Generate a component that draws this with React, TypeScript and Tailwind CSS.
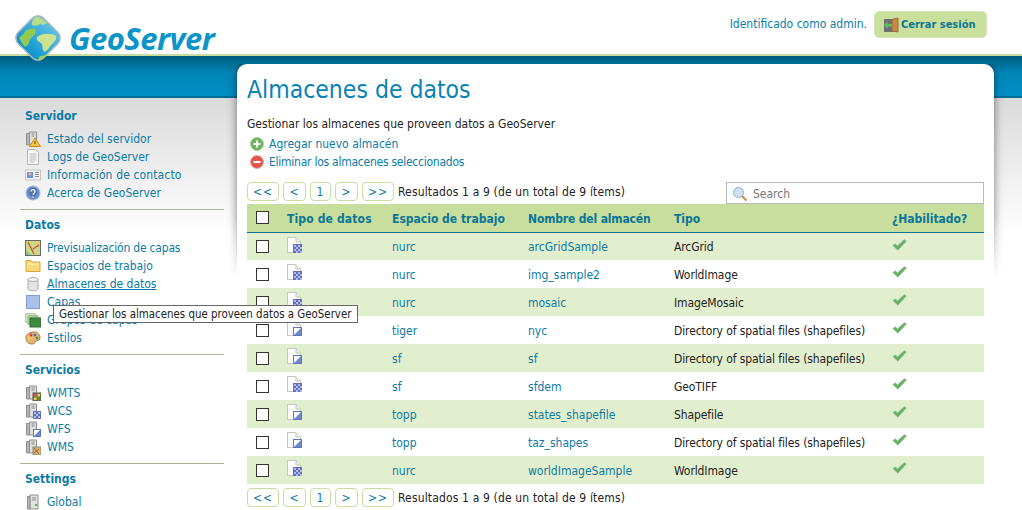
const linkClass = "text-[#0b7ba6]";

function Doc({ raster }: { raster: boolean }) {
  return (
    <svg width="16" height="16" viewBox="0 0 16 16" className="block">
      <path d="M.5.5h8.500l4.500 4.500v10.500h-13z" fill="#fff" stroke="#c3c8bd" />
      <path d="M9 .5v4.500h4.500" fill="#eee" stroke="#c3c8bd" />
      {raster ? (
        <g>
          <rect x="6" y="7" width="9" height="9" fill="#5f6fc4" />
          <path d="M7 8h2v2H7zM11 8h2v2h-2zM9 10h2v2H9zM13 10h2v2h-2zM7 12h2v2H7zM11 12h2v2h-2zM9 14h2v2H9zM13 14h2v2h-2z" fill="#b4bde8" />
        </g>
      ) : (
        <g>
          <rect x="6.500" y="7.500" width="8" height="8" fill="#fff" stroke="#5f75c4" />
          <path d="M7 15l7-7v7z" fill="#6f88d4" />
        </g>
      )}
    </svg>
  );
}

function Check() {
  return (
    <svg width="15" height="12" viewBox="0 0 15 12" className="block">
      <path d="M.8 6.500l2.400-1.700 2.300 2L12.300.6l2.200 1.300-8.600 9.400z" fill="#66ad66" stroke="#9cc49c" strokeWidth=".7" />
    </svg>
  );
}

function ServerBase() {
  return (
    <g>
      <path d="M4.500 1h7v13h-7z" fill="#dedede" stroke="#8f8f8f" />
      <path d="M1.500 2.500h3V14h-3z" fill="#b5b5b5" stroke="#8f8f8f" />
      <path d="M6.500 3h3M6.500 5h3" stroke="#8a8a8a" />
    </g>
  );
}

function NavIcon({ name }: { name: string }) {
  const wrap = (children: React.ReactNode) => (
    <svg width="16" height="16" viewBox="0 0 16 16" className="shrink-0">
      {children}
    </svg>
  );
  switch (name) {
    case "status":
      return wrap(
        <>
          <ServerBase />
          <path d="M10 7l5.500 8.500h-11z" fill="#f6c945" stroke="#c98a1c" />
          <path d="M10 10v3" stroke="#5a4210" />
        </>
      );
    case "logs":
      return wrap(
        <>
          <path d="M2.500.5h8l3 3v12h-11z" fill="#f8f8f8" stroke="#b4b4b4" />
          <path d="M4.500 5h7M4.500 7h7M4.500 9h7M4.500 11h7M4.500 13h5" stroke="#b9b9b9" />
        </>
      );
    case "contact":
      return wrap(
        <>
          <rect x=".5" y="3" width="15" height="10" fill="#f4f4f4" stroke="#c5c5c5" />
          <rect x="2" y="5" width="6" height="6" fill="#6f95d8" />
          <circle cx="5" cy="7" r="1.500" fill="#e8b48a" />
          <path d="M10 5.500h4M10 7.500h4M10 9.500h4" stroke="#8f8f8f" />
        </>
      );
    case "about":
      return wrap(
        <>
          <circle cx="8" cy="8" r="7" fill="#6f8fcb" stroke="#a9b8d8" />
          <circle cx="8" cy="7" r="4.500" fill="#4f74b8" />
          <path d="M6 6.500a2 2 0 1 1 3 1.800c-.7.400-1 .7-1 1.500M8 11.500v1" stroke="#fff" strokeWidth="1.300" fill="none" />
        </>
      );
    case "preview":
      return wrap(
        <>
          <rect x=".5" y=".5" width="15" height="15" fill="#c8d98a" stroke="#666" />
          <path d="M9 1h6v7z" fill="#e6c96a" />
          <path d="M1 10l5 5H1z" fill="#8fc08f" />
          <path d="M3 2l6 12M8 9l6-4" stroke="#d8452c" strokeWidth="1.200" />
        </>
      );
    case "folder":
      return wrap(
        <>
          <path d="M1 2.500h5l1 1.500h8v9.500H1z" fill="#f8da7c" stroke="#d9a441" />
          <path d="M2 6h12" stroke="#fff3c4" />
        </>
      );
    case "store":
      return wrap(
        <>
          <path d="M3 3v10c0 2.300 10 2.300 10 0V3z" fill="#e3e3e3" stroke="#adadad" />
          <ellipse cx="8" cy="3.500" rx="5" ry="2" fill="#f5f5f5" stroke="#adadad" />
        </>
      );
    case "layer":
      return wrap(<rect x="1.500" y="1.500" width="13" height="13" fill="#a8c0ea" stroke="#7f9fd0" />);
    case "group":
      return wrap(
        <>
          <rect x=".5" y="1.500" width="10" height="9" fill="#cfe5c5" stroke="#b7d3ab" />
          <rect x="3" y="3.500" width="10" height="9" fill="#a9cc9b" stroke="#9cc08e" />
          <rect x="5" y="6" width="11" height="9" fill="#3f8a3f" stroke="#2e6d2e" />
        </>
      );
    case "style":
      return wrap(
        <>
          <path d="M1 8c0-4 4-6 8-6s6 3 6 6-3 2-4 3-1 3-4 3-6-2-6-6z" fill="#e7b677" stroke="#a9753a" />
          <circle cx="6" cy="5" r="1.500" fill="#d8452c" />
          <circle cx="10" cy="5" r="1.500" fill="#4f74b8" />
          <circle cx="12" cy="8" r="1.500" fill="#56a04f" />
          <circle cx="4" cy="8" r="1.500" fill="#f0d44a" />
        </>
      );
    case "wmts":
      return wrap(
        <>
          <ServerBase />
          <rect x="8" y="8" width="8" height="8" fill="#68813f" stroke="#555" />
          <path d="M9 9h2.500v2.500H9z" fill="#e0584a" />
          <path d="M12.500 9H15v2.500h-2.500z" fill="#f0cf4a" />
          <path d="M9 12.500h2.500V15H9z" fill="#f0cf4a" />
        </>
      );
    case "wcs":
      return wrap(
        <>
          <ServerBase />
          <rect x="8" y="8" width="8" height="8" fill="#5f6fc4" />
          <path d="M9 9h2v2H9zM13 9h2v2h-2zM11 11h2v2h-2zM9 13h2v2H9zM13 13h2v2h-2z" fill="#b4bde8" />
        </>
      );
    case "wfs":
      return wrap(
        <>
          <ServerBase />
          <rect x="8.500" y="8.500" width="7" height="7" fill="#fff" stroke="#5f75c4" />
          <path d="M9 15l6-6v6z" fill="#6f88d4" />
        </>
      );
    case "wms":
      return wrap(
        <>
          <ServerBase />
          <rect x="8" y="8" width="8" height="8" fill="#c8bd6a" stroke="#888" />
          <path d="M9 9l5 6M9 14l5-4" stroke="#d8452c" />
        </>
      );
    default:
      return wrap(
        <>
          <path d="M5 1h8v14H5z" fill="#e2e2e2" stroke="#8f8f8f" />
          <path d="M2.500 2.500H5V15H2.500z" fill="#b5b5b5" stroke="#8f8f8f" />
          <path d="M7 4h4M7 6h4" stroke="#8a8a8a" />
          <path d="M10 11h2" stroke="#3a9a3a" strokeWidth="1.500" />
        </>
      );
  }
}

const sections = [
  {
    title: "Servidor",
    items: [
      ["status", "Estado del servidor", ""],
      ["logs", "Logs de GeoServer", ""],
      ["contact", "Información de contacto", "tracking-[0.13px]"],
      ["about", "Acerca de GeoServer", ""],
    ],
  },
  {
    title: "Datos",
    items: [
      ["preview", "Previsualización de capas", "tracking-[-0.2px]"],
      ["folder", "Espacios de trabajo", ""],
      ["store", "Almacenes de datos", "underline"],
      ["layer", "Capas", ""],
      ["group", "Grupos de capas", ""],
      ["style", "Estilos", ""],
    ],
  },
  {
    title: "Servicios",
    items: [
      ["wmts", "WMTS", ""],
      ["wcs", "WCS", ""],
      ["wfs", "WFS", ""],
      ["wms", "WMS", ""],
    ],
  },
  { title: "Settings", items: [["global", "Global", ""]] },
];

const rows = [
  [true, "nurc", "arcGridSample", "ArcGrid"],
  [true, "nurc", "img_sample2", "WorldImage"],
  [true, "nurc", "mosaic", "ImageMosaic"],
  [false, "tiger", "nyc", "Directory of spatial files (shapefiles)"],
  [false, "sf", "sf", "Directory of spatial files (shapefiles)"],
  [true, "sf", "sfdem", "GeoTIFF"],
  [false, "topp", "states_shapefile", "Shapefile"],
  [false, "topp", "taz_shapes", "Directory of spatial files (shapefiles)"],
  [true, "nurc", "worldImageSample", "WorldImage"],
] as const;

function Pager() {
  const buttons = [
    ["<<", "w-[32px]"],
    ["<", "w-[23px]"],
    ["1", "w-[21px]"],
    [">", "w-[23px]"],
    [">>", "w-[32px]"],
  ];
  return (
    <div className="flex h-[19px] items-center">
      <div className="flex gap-[4px]">
        {buttons.map(([label, width]) => (
          <span
            key={label}
            className={`flex h-[19px] items-center justify-center rounded-[4px] border border-[#c8dea0] bg-white tracking-[1px] ${linkClass} ${width}`}
          >
            {label}
          </span>
        ))}
      </div>
      <span className="ml-[4px] tracking-[0.15px] text-[#222]">Resultados 1 a 9 (de un total de 9 ítems)</span>
    </div>
  );
}

function Globe() {
  return (
    <svg width="54" height="54" viewBox="0 0 54 54" className="absolute left-[11px] top-[11px]">
      <defs>
        <linearGradient id="sea" x1="0" y1="0" x2="0" y2="1">
          <stop offset="0" stopColor="#5cc0e4" />
          <stop offset="1" stopColor="#0b93cf" />
        </linearGradient>
      </defs>
      <rect x="9" y="9" width="36" height="36" rx="8" transform="rotate(45 27 27)" fill="url(#sea)" stroke="#aebabf" strokeWidth="1.500" />
      <path d="M8 27c3-3 5-4 7-8 4-1 7-2 9-1 2 3 0 6-3 8-2 2-3 5-4 8-2 2-3 2-4 1-2-3-3-5-5-8z" fill="#8fca52" />
      <path d="M26 26c5-4 14-4 19-1 1 3-1 5-4 8-3 4-5 7-8 8-2-3-1-7-3-9-2-1-5-3-4-6z" fill="#cbe38f" />
      <path d="M25 6c3-1 7 2 11 6-2 2-5 2-7 1-3 2-5 2-8 1-1-3 1-6 4-8z" fill="#b7dc8d" />
      <path d="M29 45c3 0 6-1 8-2-2 3-6 6-9 6-1-2 0-3 1-4z" fill="#9ccf5c" />
    </svg>
  );
}

export default function App() {
  return (
    <div className="relative h-[510px] w-[1022px] overflow-hidden bg-white font-['DejaVu_Sans_Condensed','DejaVu_Sans',sans-serif] text-[12px] leading-[18px]">
      <header className="flex h-[54px] items-start justify-end pr-[35px] pt-[11px]">
        <Globe />
        <span className="absolute left-[69px] top-[17px] font-['Open_Sans',sans-serif] text-[31px] font-bold italic leading-[42px] tracking-[-0.5px] text-[#0a94c8]">
          GeoServer
        </span>
        <span className={`mr-[7px] mt-[4px] ${linkClass}`}>Identificado como admin.</span>
        <span className="flex h-[27px] w-[113px] items-center gap-[2px] whitespace-nowrap rounded-[5px] border border-[#d6e6b4] bg-[#c8e09c] pl-[8px] text-[11px] font-bold text-[#0b7596]">
          <svg width="16" height="16" viewBox="0 0 16 16" className="shrink-0">
            <path d="M1 2h9v13H1z" fill="#6f6f6f" />
            <path d="M9 2.500L15 1v14l-6-1z" fill="#c58a4a" stroke="#9a6a35" />
            <path d="M1 8l3.500-3.500V7H9v2.500H4.500V12z" fill="#5cbf68" />
          </svg>
          Cerrar sesión
        </span>
      </header>
      <div className="h-[2px] bg-[#c8dea0]" />
      <div className="h-[42px] border-b-2 border-[#006f96] bg-gradient-to-b from-[#005c7e] via-[#0085b5] via-40% to-[#0090c4]" />
      <div className="flex h-[412px] bg-[linear-gradient(#dadada,#ffffff_135px)]">
        <nav className="w-[237px] shrink-0 pl-[20px] pr-[13px] pt-[9px]">
          {sections.map((section, i) => (
            <section key={section.title} className={i < 3 ? "mb-[6px] border-b border-[#a9b890] pb-[7px]" : ""}>
              <h3 className="mb-[5px] pl-[5px] text-[12px] font-bold leading-[18px] text-[#0b7ba6]">{section.title}</h3>
              {section.items.map(([icon, label, extra]) => (
                <div key={label} className="flex h-[18px] items-center gap-[6px] pl-[5px]">
                  <NavIcon name={icon} />
                  <span className={`${linkClass} ${extra}`}>{label}</span>
                </div>
              ))}
            </section>
          ))}
        </nav>
        <div className="relative -mt-[34px] h-[446px] w-[757px] shrink-0">
          <div className="absolute inset-x-0 top-0 h-[216px] rounded-t-[10px] shadow-[0_0_10px_rgba(0,0,0,0.5)] [mask-clip:no-clip] [mask-image:linear-gradient(#000_70%,transparent)] [mask-repeat:repeat-x]" />
          <main className="relative h-full rounded-t-[10px] bg-white px-[10px] pt-[8px]">
            <h1 className="text-[24.500px] font-normal leading-[36px] text-[#0a82b4]">Almacenes de datos</h1>
            <p className="mt-[7px] text-[#222]">Gestionar los almacenes que proveen datos a GeoServer</p>
            <div className={`mt-[2px] flex h-[18px] items-center gap-[5px] pl-[3px] ${linkClass}`}>
              <svg width="14" height="14" viewBox="0 0 14 14">
                <circle cx="7" cy="7" r="6.500" fill="#6db35c" stroke="#a5cf99" />
                <path d="M7 3.500v7M3.500 7h7" stroke="#fff" strokeWidth="2" />
              </svg>
              Agregar nuevo almacén
            </div>
            <div className={`flex h-[18px] items-center gap-[5px] pl-[3px] tracking-[-0.25px] ${linkClass}`}>
              <svg width="14" height="14" viewBox="0 0 14 14">
                <circle cx="7" cy="7" r="6.500" fill="#e0564f" stroke="#eda8a3" />
                <path d="M3.500 7h7" stroke="#fff" strokeWidth="2" />
              </svg>
              Eliminar los almacenes seleccionados
            </div>
            <div className="mt-[11px] flex items-start justify-between">
              <Pager />
              <div className="flex h-[22px] w-[258px] items-center gap-[5px] border border-[#bbbbbb] bg-white pl-[5px] pt-[1px] text-[#777]">
                <svg width="16" height="16" viewBox="0 0 16 16">
                  <circle cx="6.500" cy="6.500" r="5" fill="#cfe0f2" stroke="#8fb0d0" />
                  <path d="M10 10l4.500 4.500" stroke="#c98a4a" strokeWidth="2" />
                </svg>
                Search
              </div>
            </div>
            <table className="w-[737px] table-fixed border-collapse">
              <colgroup>
                <col className="w-[40px]" />
                <col className="w-[105px]" />
                <col className="w-[136px]" />
                <col className="w-[146px]" />
                <col className="w-[218px]" />
                <col />
              </colgroup>
              <thead>
                <tr className="h-[28px] border-b border-[#0b7596] bg-[#c8de9c] text-left font-bold text-[#0b7596]">
                  <th className="pl-[9px]">
                    <span className="block size-[13px] border border-[#333] bg-white" />
                  </th>
                  <th className="pt-[2px] font-bold tracking-[0.15px]">Tipo de datos</th>
                  <th className="pt-[2px] font-bold">Espacio de trabajo</th>
                  <th className="pt-[2px] font-bold tracking-[-0.15px]">Nombre del almacén</th>
                  <th className="pt-[2px] font-bold">Tipo</th>
                  <th className="pt-[2px] font-bold">¿Habilitado?</th>
                </tr>
              </thead>
              <tbody>
                {rows.map(([raster, workspace, store, type], i) => (
                  <tr key={store} className={`h-[28px] ${i % 2 === 0 ? "bg-[#e2efcf]" : "bg-white"}`}>
                    <td className="pl-[9px] pt-[1px]">
                      <span className="block size-[13px] border border-[#333] bg-white" />
                    </td>
                    <td className="pt-[4px] align-top">
                      <Doc raster={raster} />
                    </td>
                    <td className={`pt-[2px] ${linkClass}`}>{workspace}</td>
                    <td className={`pt-[2px] ${linkClass}`}>{store}</td>
                    <td className="pt-[2px] tracking-[-0.1px] text-[#222]">{type}</td>
                    <td className="pt-[6px] align-top">
                      <Check />
                    </td>
                  </tr>
                ))}
              </tbody>
            </table>
            <div className="mt-[4px]">
              <Pager />
            </div>
          </main>
        </div>
      </div>
      <div className="absolute left-[53px] top-[305px] z-20 flex h-[18px] w-[305px] items-center whitespace-nowrap border border-[#666] bg-white pl-[5px] text-[11.400px] text-[#222]">
        Gestionar los almacenes que proveen datos a GeoServer
      </div>
    </div>
  );
}
